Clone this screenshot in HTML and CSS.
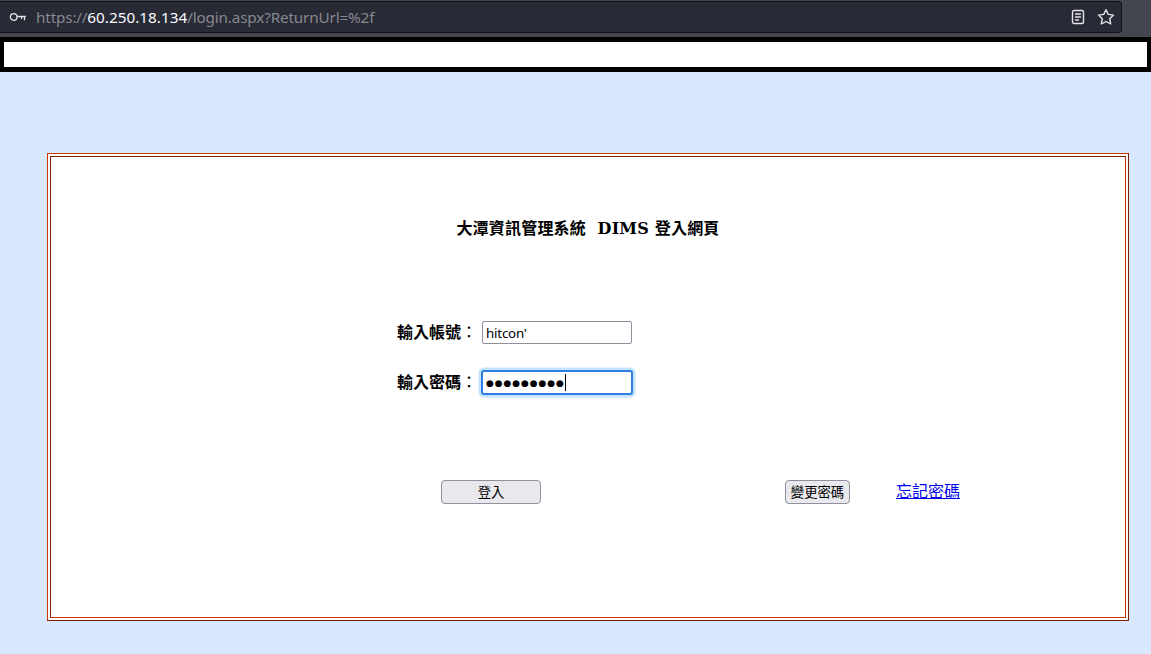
FILE: index.html
```html
<!DOCTYPE html>
<html lang="zh-Hant">
<head>
  <meta charset="utf-8">
  <title>DIMS</title>
  <link rel="stylesheet" href="styles.css">
</head>
<body>
<div class="toolbar">
  <div class="urlbar">
    <svg class="key" width="18" height="12" viewBox="0 0 18 12" fill="none" stroke="#e4e4e8" stroke-width="1.3">
      <circle cx="4.7" cy="6" r="3.3"/>
      <path d="M8 5.5h8.8M15.5 5.5v3.8M12.5 5.5v2.5"/>
    </svg>
    <div class="url">https://<span class="host">60.250.18.134</span>/login.aspx?ReturnUrl=%2f</div>
    <svg class="reader" width="14" height="16" viewBox="0 0 14 16" fill="none" stroke="#e4e4e8" stroke-width="1.4" stroke-linecap="round">
      <rect x="1.5" y="1.5" width="11" height="13" rx="1.5"/>
      <path d="M4.5 5h5M4.5 8h5M4.5 11h3"/>
    </svg>
    <svg class="star" width="18" height="18" viewBox="0 0 18 18" fill="none" stroke="#e4e4e8" stroke-width="1.4" stroke-linejoin="round">
      <path d="M9 1.7l2.3 4.7 5.2.7-3.8 3.6 1 5.3L9 13.5 4.3 16l1-5.3L1.5 7.1l5.2-.7z"/>
    </svg>
  </div>
</div>
<div class="banner"></div>
<div class="frame">
  <form class="login">
    <h1 class="title">大潭資訊管理系統&nbsp; DIMS 登入網頁</h1>
    <div class="row">
      <label class="label" for="account">輸入帳號<span class="colon" lang="ja">：</span></label>
      <input class="field" id="account" type="text" value="hitcon'">
    </div>
    <div class="row">
      <span class="label">輸入密碼<span class="colon" lang="ja">：</span></span>
      <div class="field focused"><span class="dots">●●●●●●●●●</span><span class="caret"></span></div>
    </div>
    <div class="actions">
      <button class="btn submit" type="button">登入</button>
      <button class="btn change" type="button">變更密碼</button>
      <a class="forgot" href="#">忘記密碼</a>
    </div>
  </form>
</div>
</body>
</html>
```

FILE: styles.css
```css
* {
  box-sizing: border-box;
}

body {
  margin: 0;
  height: 654px;
  overflow: hidden;
  background: #d7e8ff;
  font: 16px "DejaVu Serif", "Noto Sans CJK TC", serif;
  color: #000;
}

.toolbar {
  height: 37px;
  padding-top: 1px;
  background: #43464e;
}

.urlbar {
  display: flex;
  align-items: center;
  width: 1122px;
  height: 32px;
  padding: 0 6px 0 9px;
  border: 1px solid #111217;
  border-left: 0;
  border-radius: 0 4px 4px 0;
  background: #282a36;
}

.url {
  flex: 1;
  margin-left: 9px;
  font: 15.3px/22px "Noto Sans", sans-serif;
  letter-spacing: -0.17px;
  color: #87888f;
  white-space: nowrap;
}

.host {
  letter-spacing: 0;
  color: #fbfbfe;
}

.star {
  margin-left: 12px;
}

.banner {
  height: 35px;
  border: 5px solid #000;
  border-width: 5px 4px;
  background: #fff;
}

.frame {
  width: 1082px;
  height: 468px;
  margin: 81px 0 0 47px;
  padding: 2px;
  border: 1px solid;
  border-color: #cc3300 #802000 #802000 #cc3300;
  background: #fff;
}

.login {
  height: 462px;
  border: 1px solid;
  border-color: #802000 #cc3300 #cc3300 #802000;
}

.title {
  margin: 59px 0 79px;
  font-size: 16px;
  line-height: 26px;
  letter-spacing: 0.2px;
  text-align: center;
}

.row {
  display: flex;
  align-items: flex-start;
  height: 24px;
  margin: 0 0 26px 346px;
}

.label {
  width: 85px;
  font-weight: bold;
  line-height: 20px;
  white-space: nowrap;
}

.colon {
  font-family: "Noto Sans CJK JP", sans-serif;
  font-weight: normal;
}

.field {
  width: 150px;
  height: 23px;
  padding: 1px 3px 0;
  border: 1px solid #8f8f9d;
  border-radius: 2px;
  background: #fff;
  font: 13.33px "Noto Sans", sans-serif;
  letter-spacing: -0.2px;
}

.focused {
  display: flex;
  align-items: center;
  width: 152px;
  height: 25px;
  margin: -1px 0 0 -1px;
  padding: 0 3px;
  border: 2px solid #2f7fe0;
  border-radius: 3px;
  box-shadow: 0 0 0 2.5px #c5e2ff;
}

.dots {
  width: 79px;
  font: 9px/20px "DejaVu Sans", sans-serif;
  letter-spacing: 0.9px;
  white-space: nowrap;
}

.caret {
  width: 1px;
  height: 17px;
  background: #000;
}

.actions {
  display: flex;
  align-items: center;
  height: 24px;
  margin: 85px 0 0 390px;
}

.btn {
  height: 24px;
  padding: 0 0 2px;
  border: 1px solid #8f8f9d;
  border-radius: 4px;
  background: #e9e9ed;
  font: 13.33px "Noto Sans CJK TC", sans-serif;
  color: #000;
}

.submit {
  width: 100px;
}

.change {
  width: 65px;
  margin: 0 46px 0 244px;
}

.forgot {
  color: #0000ee;
  line-height: 24px;
}
```
